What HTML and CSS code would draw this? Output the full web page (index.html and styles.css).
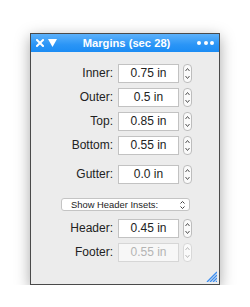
FILE: index.html
```html
<!DOCTYPE html>
<html>
<head>
<meta charset="utf-8">
<link rel="stylesheet" href="styles.css">
</head>
<body>
<div class="window">
  <div class="titlebar">
    <div class="tb-left">
      <svg class="ico-x" width="8" height="8" viewBox="0 0 8 8"><path d="M1 1 L7 7 M7 1 L1 7" stroke="#fff" stroke-width="2" stroke-linecap="square"/></svg>
      <svg class="ico-tri" width="9" height="8" viewBox="0 0 9 8"><path d="M0 0 H9 L4.5 8 Z" fill="#fff"/></svg>
    </div>
    <div class="title">Margins (sec 28)</div>
    <div class="tb-right">
      <span class="dot"></span><span class="dot"></span><span class="dot"></span>
    </div>
  </div>
  <div class="content">
    <div class="grid">
      <label class="lbl">Inner:</label><div class="field">0.75 in</div><div class="stepper"><svg width="9" height="19" viewBox="0 0 9 19"><path d="M2.5 7 L4.5 4.5 L6.5 7 M2.5 12 L4.5 14.5 L6.5 12" fill="none" stroke="#555" stroke-width="1"/></svg></div>
      <label class="lbl">Outer:</label><div class="field">0.5 in</div><div class="stepper"><svg width="9" height="19" viewBox="0 0 9 19"><path d="M2.5 7 L4.5 4.5 L6.5 7 M2.5 12 L4.5 14.5 L6.5 12" fill="none" stroke="#555" stroke-width="1"/></svg></div>
      <label class="lbl">Top:</label><div class="field">0.85 in</div><div class="stepper"><svg width="9" height="19" viewBox="0 0 9 19"><path d="M2.5 7 L4.5 4.5 L6.5 7 M2.5 12 L4.5 14.5 L6.5 12" fill="none" stroke="#555" stroke-width="1"/></svg></div>
      <label class="lbl">Bottom:</label><div class="field">0.55 in</div><div class="stepper"><svg width="9" height="19" viewBox="0 0 9 19"><path d="M2.5 7 L4.5 4.5 L6.5 7 M2.5 12 L4.5 14.5 L6.5 12" fill="none" stroke="#555" stroke-width="1"/></svg></div>
    </div>
    <div class="grid gutter">
      <label class="lbl">Gutter:</label><div class="field">0.0 in</div><div class="stepper"><svg width="9" height="19" viewBox="0 0 9 19"><path d="M2.5 7 L4.5 4.5 L6.5 7 M2.5 12 L4.5 14.5 L6.5 12" fill="none" stroke="#555" stroke-width="1"/></svg></div>
    </div>
    <div class="popup">
      <span class="popup-text">Show Header Insets:</span>
      <svg class="popup-arrows" width="7" height="10" viewBox="0 0 7 10"><path d="M1.5 3.5 L3.5 1.5 L5.5 3.5 M1.5 6.5 L3.5 8.5 L5.5 6.5" fill="none" stroke="#444" stroke-width="1"/></svg>
    </div>
    <div class="grid hf">
      <label class="lbl">Header:</label><div class="field">0.45 in</div><div class="stepper"><svg width="9" height="19" viewBox="0 0 9 19"><path d="M2.5 7 L4.5 4.5 L6.5 7 M2.5 12 L4.5 14.5 L6.5 12" fill="none" stroke="#555" stroke-width="1"/></svg></div>
      <label class="lbl">Footer:</label><div class="field disabled">0.55 in</div><div class="stepper disabled"><svg width="9" height="19" viewBox="0 0 9 19"><path d="M2.5 7 L4.5 4.5 L6.5 7 M2.5 12 L4.5 14.5 L6.5 12" fill="none" stroke="#bbb" stroke-width="1"/></svg></div>
    </div>
    <svg class="grip" width="11" height="11" viewBox="0 0 11 11">
      <path d="M11 1 L1 11 M11 4 L4 11 M11 7 L7 11 M11 10 L10 11" stroke="#3d8ef0" stroke-width="1.4"/>
    </svg>
  </div>
</div>
</body>
</html>
```

FILE: styles.css
```css
html, body {
  margin: 0;
  padding: 0;
  background: #ffffff;
}
body {
  font-family: "Liberation Sans", Arial, sans-serif;
  padding: 33px 0 0 30px;
}
.window {
  width: 190px;
  height: 252px;
  box-sizing: border-box;
  border: 1px solid #4a4a4a;
  background: #ececec;
  box-shadow: 0 4px 14px rgba(0,0,0,0.35);
  display: flex;
  flex-direction: column;
}
.titlebar {
  height: 18px;
  background: linear-gradient(#5cb1fb, #2a95f6 60%, #1b8cf4);
  display: flex;
  align-items: center;
  position: relative;
}
.tb-left {
  display: flex;
  align-items: center;
  gap: 4px;
  padding-left: 5px;
  width: 40px;
}
.ico-x { display: block; }
.ico-tri { display: block; }
.title {
  flex: 1;
  text-align: center;
  color: #fff;
  font-weight: bold;
  font-size: 11.2px;
  padding-right: 2px;
}
.tb-right {
  width: 40px;
  display: flex;
  justify-content: flex-end;
  gap: 2.5px;
  padding-right: 5px;
  box-sizing: border-box;
}
.dot {
  width: 4px;
  height: 4px;
  border-radius: 50%;
  background: #fff;
}
.content {
  flex: 1;
  padding-top: 12px;
  position: relative;
}
.grid {
  display: grid;
  grid-template-columns: 82px 61px 9px;
  column-gap: 5px;
  row-gap: 5px;
  grid-auto-rows: 19px;
  align-items: center;
}
.gutter { margin-top: 10px; }
.hf { margin-top: 8px; }
.lbl {
  text-align: right;
  font-size: 12px;
  color: #222;
  line-height: 19px;
}
.field {
  height: 19px;
  box-sizing: border-box;
  background: #fff;
  border: 1px solid #c2c2c2;
  font-size: 12px;
  color: #222;
  text-align: center;
  line-height: 17px;
}
.field.disabled {
  color: #b4b4b4;
  border-color: #d6d6d6;
  background: #f7f7f7;
}
.stepper {
  margin-left: -1px;
  width: 9px;
  height: 19px;
  box-sizing: border-box;
  border: 1px solid #bdbdbd;
  border-radius: 4px;
  background: #fafafa;
  position: relative;
  overflow: hidden;
}
.stepper svg {
  position: absolute;
  left: -1px;
  top: -1px;
}
.stepper.disabled { border-color: #d8d8d8; }
.popup {
  margin: 14px 0 0 30px;
  width: 129px;
  height: 13px;
  box-sizing: border-box;
  border: 1px solid #c4c4c4;
  border-radius: 3px;
  background: #fff;
  display: flex;
  align-items: center;
  position: relative;
}
.popup-text {
  font-size: 9.4px;
  color: #222;
  padding-left: 9px;
  flex: 1;
}
.popup-arrows {
  display: block;
  margin-right: 3px;
}
.grip {
  position: absolute;
  right: 2px;
  bottom: 2px;
}
```
